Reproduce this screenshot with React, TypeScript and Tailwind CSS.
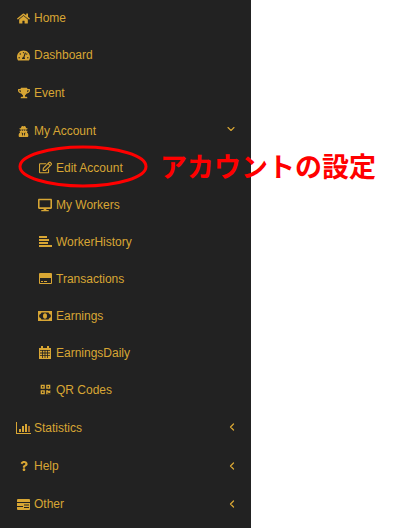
import type { ReactNode } from 'react';
import { ChevronDown, ChevronLeft } from 'lucide-react';
import {
  FaHome,
  FaTachometerAlt,
  FaTrophy,
  FaUserSecret,
  FaRegEdit,
  FaDesktop,
  FaQrcode,
  FaQuestion,
} from 'react-icons/fa';

function HistoryIcon() {
  return (
    <svg width="13" height="11" viewBox="0 0 13 11" fill="currentColor">
      <rect x="0" y="0" width="8" height="2" />
      <rect x="0" y="3" width="10" height="2" />
      <rect x="0" y="6" width="9" height="2" />
      <rect x="0" y="9" width="13" height="2" />
    </svg>
  );
}

function CardIcon() {
  return (
    <svg width="13" height="11" viewBox="0 0 13 11" fill="currentColor">
      <path fillRule="evenodd" d="M1 0h11a1 1 0 0 1 1 1v9a1 1 0 0 1-1 1H1a1 1 0 0 1-1-1V1a1 1 0 0 1 1-1zM1 5v5h11V5z" />
      <path d="M2 8h2v1H2zM5 8h3v1H5z" />
    </svg>
  );
}

function MoneyIcon() {
  return (
    <svg width="14" height="10" viewBox="0 0 14 10" fill="currentColor">
      <path fillRule="evenodd" d="M0 0h14v10H0zM3.5 1.5C2.8 3 2.2 3.5 1.2 3.8v2.4c1 .3 1.600.8 2.300 2.300h7c.7-1.500 1.300-2 2.300-2.300V3.800c-1-.3-1.600-.8-2.300-2.300z" />
      <ellipse cx="7" cy="5" rx="2" ry="2.800" />
    </svg>
  );
}

function CalendarIcon() {
  return (
    <svg width="12" height="13" viewBox="0 0 12 13" fill="currentColor">
      <path d="M2 0h2v2h4V0h2v2h2v11H0V2h2z" />
      <path fill="#222222" d="M1 4h10v.8H1zM1 6.600h10v.8H1zM1 9.200h10v.8H1zM3 4h.8v8H3zM5.600 4h.8v8h-.8zM8.200 4H9v8h-.8z" />
    </svg>
  );
}

function StatsIcon() {
  return (
    <svg width="15" height="12" viewBox="0 0 15 12" fill="currentColor">
      <path d="M0 0h1v11h14v1H0z" />
      <rect x="3" y="7" width="2" height="3" />
      <rect x="6" y="4" width="2" height="6" />
      <rect x="9" y="2" width="2" height="8" />
      <rect x="12" y="4" width="2" height="6" fill="#a8702a" />
    </svg>
  );
}

function OtherIcon() {
  return (
    <svg width="13" height="11" viewBox="0 0 13 11" fill="currentColor">
      <rect width="13" height="11" rx="1" />
      <path fill="#222222" d="M0 3h13v1H0zM7 5.500h5v1H7zM7 8h5v1H7zM0 7h6v1H0z" />
    </svg>
  );
}

function TopItem({ icon, label, arrow, className }: { icon: ReactNode; label: string; arrow?: 'down' | 'left'; className: string }) {
  return (
    <li className={`flex items-center pl-4 pr-[15px] ${className}`}>
      <span className="flex w-[18px] justify-center pr-[3px]">{icon}</span>
      <span>{label}</span>
      {arrow === 'down' && <ChevronDown size={12} strokeWidth={2.25} className="-mt-[5px] ml-auto -mr-[1px]" />}
      {arrow === 'left' && <ChevronLeft size={12} strokeWidth={2.5} className="-mt-[1px] ml-auto -mr-[2px]" />}
    </li>
  );
}

function SubItem({ icon, label }: { icon: ReactNode; label: string }) {
  return (
    <li className="flex h-[37px] items-center pl-[38px]">
      <span className="flex w-[18px] justify-center pr-[4px]">{icon}</span>
      <span>{label}</span>
    </li>
  );
}

export default function App() {
  return (
    <div className="relative h-[528px] w-[400px] overflow-hidden bg-white font-['Liberation_Sans',sans-serif] text-xs">
      <ul className="h-full w-[251px] bg-[#222222] text-[#d8a634]">
        <TopItem icon={<FaHome size={13} />} label="Home" className="h-[36px]" />
        <TopItem icon={<FaTachometerAlt size={13} />} label="Dashboard" className="h-[38px]" />
        <TopItem icon={<FaTrophy size={12} />} label="Event" className="h-[37px]" />
        <TopItem icon={<FaUserSecret size={11} />} label="My Account" arrow="down" className="h-[38px] pt-[2px]" />
        <SubItem icon={<FaRegEdit size={13} />} label="Edit Account" />
        <SubItem icon={<FaDesktop size={14} />} label="My Workers" />
        <SubItem icon={<HistoryIcon />} label="WorkerHistory" />
        <SubItem icon={<CardIcon />} label="Transactions" />
        <SubItem icon={<MoneyIcon />} label="Earnings" />
        <SubItem icon={<CalendarIcon />} label="EarningsDaily" />
        <SubItem icon={<FaQrcode size={11} />} label="QR Codes" />
        <TopItem icon={<StatsIcon />} label="Statistics" arrow="left" className="h-[39px]" />
        <TopItem icon={<FaQuestion size={10} />} label="Help" arrow="left" className="h-[38px]" />
        <TopItem icon={<OtherIcon />} label="Other" arrow="left" className="h-[38px]" />
      </ul>

      {/* red annotation drawn over the menu */}
      <svg className="absolute left-[18px] top-[145px]" width="132" height="44" viewBox="0 0 132 44">
        <ellipse cx="65" cy="21.5" rx="63" ry="19.5" fill="none" stroke="#ff0000" strokeWidth="3" />
      </svg>
      <span className="absolute left-[160px] top-[147px] whitespace-nowrap font-['Noto_Sans_CJK_JP',sans-serif] text-[27px] leading-[38px] font-bold text-[#ff0000]">
        アカウントの設定
      </span>
    </div>
  );
}
